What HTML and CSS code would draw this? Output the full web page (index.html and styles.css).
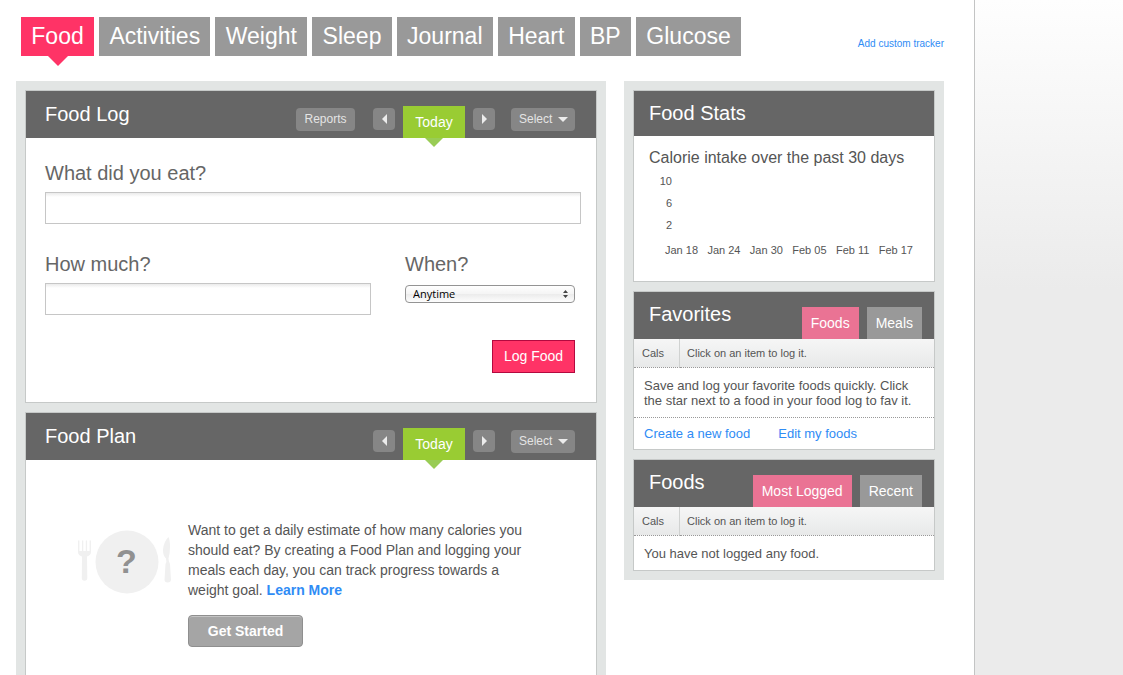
FILE: index.html
```
<!DOCTYPE html>
<html lang="en">
<head>
<meta charset="utf-8">
<title>Food Log</title>
<link rel="stylesheet" href="styles.css">
</head>
<body>
<div class="page">
  <header class="topbar">
    <nav class="trackers" aria-label="Trackers">
      <a class="tracker active" href="#">Food</a>
      <a class="tracker" href="#">Activities</a>
      <a class="tracker" href="#">Weight</a>
      <a class="tracker" href="#">Sleep</a>
      <a class="tracker" href="#">Journal</a>
      <a class="tracker" href="#">Heart</a>
      <a class="tracker" href="#">BP</a>
      <a class="tracker" href="#">Glucose</a>
    </nav>
    <a class="link add-tracker" href="#">Add custom tracker</a>
  </header>

  <div class="columns">
    <main class="column column-main">
      <section class="card">
        <div class="card-head">
          <h2>Food Log</h2>
          <div class="controls">
            <button class="pill reports" type="button">Reports</button>
            <button class="pill step" type="button" aria-label="Previous day"><svg width="5" height="10" viewBox="0 0 5 10"><path d="M5 0v10L0 5z"/></svg></button>
            <button class="today" type="button">Today</button>
            <button class="pill step" type="button" aria-label="Next day"><svg width="5" height="10" viewBox="0 0 5 10"><path d="M0 0v10l5-5z"/></svg></button>
            <button class="pill menu" type="button">Select <svg width="10" height="5" viewBox="0 0 10 5"><path d="M0 0h10L5 5z"/></svg></button>
          </div>
        </div>
        <form class="log-form">
          <div class="field">
            <label for="what">What did you eat?</label>
            <input id="what" type="text">
          </div>
          <div class="field-row">
            <div class="field">
              <label for="amount">How much?</label>
              <input id="amount" type="text">
            </div>
            <div class="field">
              <label for="when">When?</label>
              <div class="select-wrap">
                <select id="when"><option>Anytime</option></select>
                <svg class="select-arrows" width="5" height="8" viewBox="0 0 5 8"><path d="M0 3L2.500 0L5 3zM0 5h5L2.500 8z"/></svg>
              </div>
            </div>
          </div>
          <button class="submit" type="button">Log Food</button>
        </form>
      </section>

      <section class="card card-plan">
        <div class="card-head">
          <h2>Food Plan</h2>
          <div class="controls">
            <button class="pill step" type="button" aria-label="Previous day"><svg width="5" height="10" viewBox="0 0 5 10"><path d="M5 0v10L0 5z"/></svg></button>
            <button class="today" type="button">Today</button>
            <button class="pill step" type="button" aria-label="Next day"><svg width="5" height="10" viewBox="0 0 5 10"><path d="M0 0v10l5-5z"/></svg></button>
            <button class="pill menu" type="button">Select <svg width="10" height="5" viewBox="0 0 10 5"><path d="M0 0h10L5 5z"/></svg></button>
          </div>
        </div>
        <div class="plan">
          <div class="plate">
            <svg width="94" height="64" viewBox="0 0 94 64" aria-hidden="true">
              <g fill="#f0f0f0">
                <circle cx="49" cy="32" r="31.500"/>
                <path d="M0 10.500h1.400V21H4V10.500h1.300V21h2.500V10.500h1.300V21h2.500V10.500H13V22q0 3-4 4.500L9.300 48q0 2.700-2.800 2.700T3.800 48L4 26.500q-4-1.500-4-4.500z"/>
                <path d="M90.500 7q1.500 3 1.500 10 0 7-1.500 11.500 0 3 1.500 5.500l1 15.500q0 3-3.300 3t-3.200-3L87.500 34q1.500-2 .5-5.500Q85 26 85 19.500 86 11 90.500 7z"/>
              </g>
            </svg>
            <span class="plate-mark">?</span>
          </div>
          <div class="plan-text">
            <p>Want to get a daily estimate of how many calories you should eat? By creating a Food Plan and logging your meals each day, you can track progress towards a weight goal. <a class="link learn" href="#">Learn More</a></p>
            <button class="start" type="button">Get Started</button>
          </div>
        </div>
      </section>
    </main>

    <aside class="column column-side">
      <section class="card">
        <div class="card-head short">
          <h2>Food Stats</h2>
        </div>
        <div class="stats">
          <h3>Calorie intake over the past 30 days</h3>
          <ul class="axis-y"><li>10</li><li>6</li><li>2</li></ul>
          <ul class="axis-x"><li>Jan 18</li><li>Jan 24</li><li>Jan 30</li><li>Feb 05</li><li>Feb 11</li><li>Feb 17</li></ul>
        </div>
      </section>

      <section class="card">
        <div class="card-head">
          <h2>Favorites</h2>
          <div class="tabs">
            <button class="tab active" type="button">Foods</button>
            <button class="tab" type="button">Meals</button>
          </div>
        </div>
        <table class="list">
          <thead><tr><th class="cals">Cals</th><th>Click on an item to log it.</th></tr></thead>
          <tbody><tr><td colspan="2">Save and log your favorite foods quickly. Click the star next to a food in your food log to fav it.</td></tr></tbody>
        </table>
        <div class="list-links">
          <a class="link" href="#">Create a new food</a>
          <a class="link" href="#">Edit my foods</a>
        </div>
      </section>

      <section class="card">
        <div class="card-head">
          <h2>Foods</h2>
          <div class="tabs">
            <button class="tab active" type="button">Most Logged</button>
            <button class="tab" type="button">Recent</button>
          </div>
        </div>
        <table class="list">
          <thead><tr><th class="cals">Cals</th><th>Click on an item to log it.</th></tr></thead>
          <tbody><tr><td colspan="2">You have not logged any food.</td></tr></tbody>
        </table>
      </section>
    </aside>
  </div>
</div>
</body>
</html>
```
FILE: styles.css
```
* { box-sizing: border-box; }

body {
  margin: 0;
  background: #ebebeb linear-gradient(#fefefe, #ebebeb 290px) no-repeat;
  color: #555;
  font-family: "Liberation Sans", Arial, Helvetica, sans-serif;
  font-size: 13px;
  line-height: 15px;
}

h2, h3, p, ul { margin: 0; padding: 0; font-weight: normal; }
ul { list-style: none; }
svg { display: block; }

button, input, select {
  margin: 0;
  font: inherit;
}
button { padding: 0; border: 0; cursor: pointer; }

.link { color: #2f8cf5; text-decoration: none; }

.page {
  display: flex;
  flex-direction: column;
  min-height: 100vh;
  margin-right: 148px;
  padding: 17px 30px 0 16px;
  border-right: 1px solid #c3c4c4;
  background: #fff;
}

/* Tracker navigation */
.topbar {
  display: flex;
  justify-content: space-between;
  align-items: flex-start;
  padding: 0 0 25px 5px;
}
.trackers { display: flex; gap: 5px; flex-basis: 720px; }
.tracker {
  position: relative;
  flex-grow: 1;
  padding: 0 10px;
  background: #999;
  color: #fff;
  font-size: 23px;
  line-height: 39px;
  text-align: center;
  text-decoration: none;
}
.tracker.active { background: #f36; }
.tracker.active::after {
  content: "";
  position: absolute;
  top: 100%;
  left: 50%;
  margin-left: -10px;
  border: 10px solid transparent;
  border-top-color: #f36;
  border-bottom: 0;
}
.add-tracker { padding-top: 19px; font-size: 10px; }

/* Columns and cards */
.columns {
  display: grid;
  grid-template-columns: 1fr 320px;
  gap: 18px;
  flex: 1;
}
.column {
  display: flex;
  flex-direction: column;
  gap: 9px;
  padding: 9px;
  background: #e2e5e4;
}
.column-main { padding-bottom: 0; }
.column-side { align-self: start; }
.card {
  border: 1px solid #c6c9c8;
  background: #fff;
}
.card-plan { flex: 1; border-bottom: 0; }
.card-head {
  display: flex;
  justify-content: space-between;
  height: 47px;
  background: #666;
  color: #fff;
}
.card-head.short { height: 45px; }
.card-head h2 {
  padding-left: 19px;
  font-size: 20px;
  line-height: 46px;
}
.column-side h2 { padding-left: 15px; line-height: 44px; }

/* Header controls */
.controls {
  display: flex;
  align-items: flex-start;
  gap: 8px;
  padding: 15px 21px 0 0;
}
.pill {
  height: 23px;
  margin-top: 2px;
  border-radius: 4px;
  background: #868686;
  color: #e4e4e4;
  font-size: 12px;
}
.pill svg { fill: #ececec; }
.reports { width: 59px; margin-right: 10px; }
.step {
  display: flex;
  align-items: center;
  justify-content: center;
  width: 22px;
  height: 22px;
}
.menu {
  display: flex;
  align-items: center;
  justify-content: space-between;
  width: 64px;
  margin-left: 8px;
  padding: 0 7px 0 8px;
}
.today {
  position: relative;
  width: 62px;
  height: 32px;
  background: #9c3;
  color: #fff;
  font-size: 14px;
}
.today::after {
  content: "";
  position: absolute;
  top: 100%;
  left: 50%;
  margin-left: -9px;
  border: 9px solid transparent;
  border-top-color: #9c5;
  border-bottom: 0;
}

/* Log form */
.log-form {
  display: flex;
  flex-direction: column;
  gap: 28px;
  padding: 23px 15px 29px 19px;
}
.field {
  display: flex;
  flex-direction: column;
  gap: 7px;
}
.field label { font-size: 20px; line-height: 24px; color: #666; }
.field input {
  width: 100%;
  height: 32px;
  padding: 0 8px;
  border: 1px solid #c6c6c6;
  background: #fff linear-gradient(#ebebeb, #fff) no-repeat 0 0 / 100% 4px;
}
.field-row {
  display: grid;
  grid-template-columns: 1fr 170px;
  gap: 34px;
  padding-right: 6px;
}
.select-wrap { position: relative; padding-top: 2px; }
.select-wrap select {
  appearance: none;
  display: block;
  width: 100%;
  height: 18px;
  padding: 0 20px 0 7px;
  border: 1px solid #949494;
  border-radius: 4px;
  background: linear-gradient(#fff, #f4f4f4 50%, #ebebeb 50%, #fdfdfd);
  color: #000;
  font-family: "Open Sans", "Noto Sans", sans-serif;
  font-size: 11px;
  line-height: 16px;
}
.select-arrows {
  position: absolute;
  top: 7px;
  right: 7px;
  fill: #444;
  pointer-events: none;
}
.submit {
  align-self: flex-end;
  width: 83px;
  height: 33px;
  margin: -3px 6px 0 0;
  border: 1px solid #b3093f;
  background: #f36;
  color: #fff;
  font-size: 14px;
}

/* Food plan */
.plan {
  display: flex;
  gap: 16px;
  padding: 60px 52px 28px;
  font-size: 14px;
  line-height: 20px;
}
.plate { position: relative; flex: none; padding-top: 10px; }
.plate-mark {
  position: absolute;
  top: 25px;
  left: 38px;
  color: #919191;
  font-size: 34px;
  font-weight: bold;
  line-height: 32px;
}
.plan-text { max-width: 352px; }
.learn { font-weight: bold; }
.start {
  width: 115px;
  height: 32px;
  margin-top: 15px;
  border: 1px solid #8f8f8f;
  border-radius: 4px;
  background: #a5a5a5;
  box-shadow: inset 0 1px #c4c4c4;
  color: #fff;
  font-size: 14px;
  font-weight: bold;
}

/* Stats */
.stats { padding: 12px 21px 23px 15px; font-size: 11px; color: #555; }
.stats h3 { font-size: 16px; line-height: 20px; white-space: nowrap; }
.axis-y { width: 23px; padding: 2px 0 6px; line-height: 22px; text-align: right; }
.axis-x {
  display: flex;
  justify-content: space-between;
  padding-left: 16px;
  line-height: 16px;
}

/* Favourites and foods lists */
.tabs {
  display: flex;
  align-items: flex-end;
  gap: 8px;
  padding-right: 12px;
}
.tab {
  height: 32px;
  padding: 0 9px;
  background: #999;
  color: #fff;
  font-size: 14px;
}
.tab.active { background: #ea7394; }
.list { width: 100%; border-spacing: 0; }
.list th {
  height: 29px;
  padding: 0 7px;
  border-bottom: 1px dotted #999;
  background: linear-gradient(#f6f6f6, #e8e9e9);
  font-size: 11px;
  font-weight: normal;
  text-align: left;
}
.list .cals {
  width: 46px;
  padding-left: 8px;
  border-right: 1px solid #d0d2d1;
}
.list td { padding: 10px 10px 9px; }
.list-links {
  display: flex;
  gap: 28px;
  padding: 8px 10px;
  border-top: 1px dotted #999;
}
```
